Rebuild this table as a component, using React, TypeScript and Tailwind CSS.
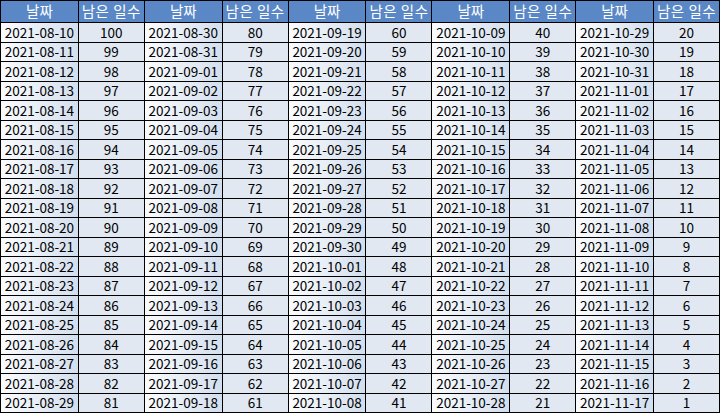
const start = new Date(2021, 7, 10);

const fmt = (d: Date) => {
  const m = String(d.getMonth() + 1).padStart(2, "0");
  const day = String(d.getDate()).padStart(2, "0");
  return `${d.getFullYear()}-${m}-${day}`;
};

const rows = Array.from({ length: 20 }, (_, r) =>
  Array.from({ length: 5 }, (_, c) => {
    const i = c * 20 + r;
    const d = new Date(start);
    d.setDate(start.getDate() + i);
    return { date: fmt(d), left: 100 - i };
  })
);

export default function App() {
  return (
    <div
      className="w-[720px] h-[413px] bg-black p-px grid grid-cols-[repeat(5,77fr_65fr)] grid-rows-[21px_repeat(20,1fr)] gap-px text-[13.5px] text-black overflow-hidden"
      style={{ fontFamily: '"Noto Sans CJK KR", "Noto Sans", sans-serif' }}
    >
      {Array.from({ length: 5 }).map((_, i) => (
        <div key={`h${i}`} className="contents">
          <div className="bg-[#5a87c5] text-white flex items-center justify-center text-[14.5px] leading-none">날짜</div>
          <div className="bg-[#5a87c5] text-white flex items-center justify-center text-[14.5px] leading-none tracking-[0.5px]">남은 일수</div>
        </div>
      ))}
      {rows.map((row, r) =>
        row.map((cell, c) => (
          <div key={`${r}-${c}`} className="contents">
            <div className="bg-gradient-to-r from-[#fbfcfe] to-[#d3dfee] flex items-center justify-center leading-none">
              {cell.date}
            </div>
            <div className="bg-[#e1e8f2] flex items-center justify-center leading-none">{cell.left}</div>
          </div>
        ))
      )}
    </div>
  );
}
